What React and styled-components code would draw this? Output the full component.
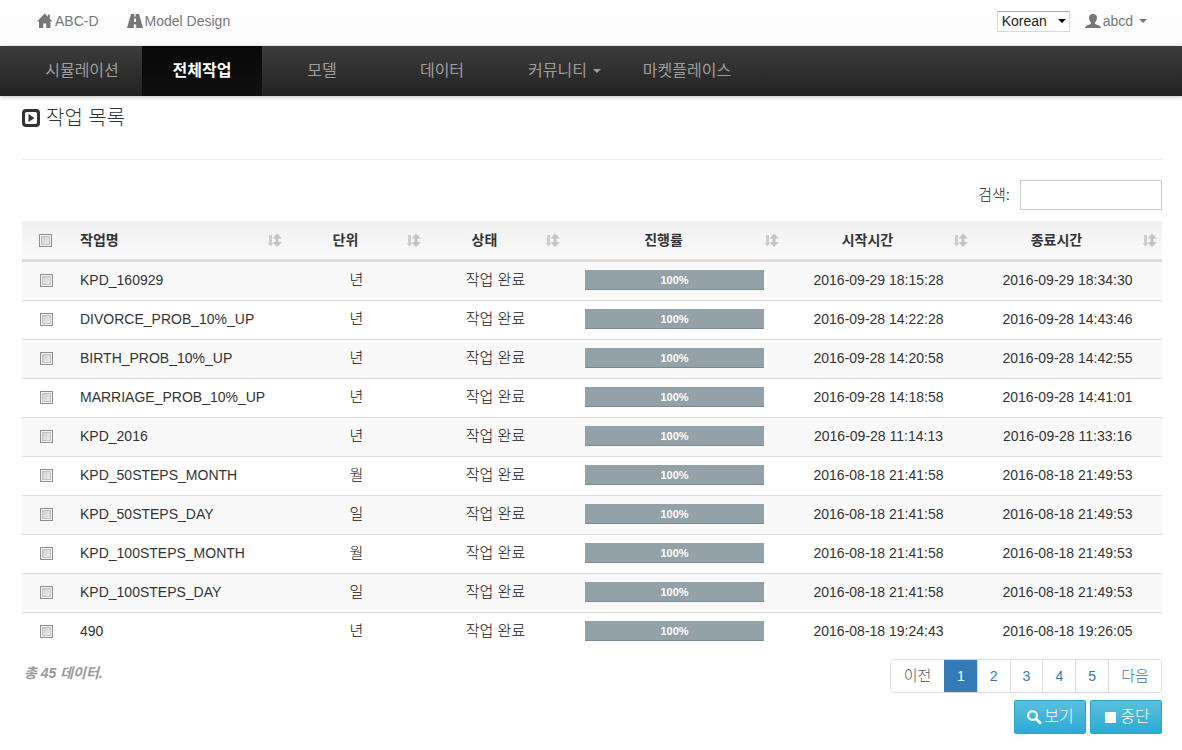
import React, { useState } from "react";
import styled, { createGlobalStyle, css } from "styled-components";

const GlobalStyle = createGlobalStyle`
  * {
    box-sizing: border-box;
  }

  body {
    margin: 0;
    background: #fff;
    color: #333;
    font-family: "Liberation Sans", Arial, "Noto Sans CJK KR", sans-serif;
    font-size: 14px;
    line-height: 20px;
  }

  a {
    text-decoration: none;
  }
`;

const TopBar = styled.header`
  display: flex;
  align-items: center;
  justify-content: space-between;
  height: 46px;
  padding: 0 35px 4px 37px;
  background: linear-gradient(#fff, #fafafa);
`;

const TopGroup = styled.div`
  display: flex;
  align-items: center;
  gap: ${({ $gap }) => $gap}px;
`;

const TopLink = styled.a`
  display: flex;
  align-items: center;
  gap: 2px;
  color: #777;
`;

const Icon = styled.svg`
  flex: none;
  width: ${({ $size }) => $size || 16}px;
  height: ${({ $size }) => $size || 16}px;
  fill: currentColor;
`;

const Caret = styled.span`
  width: 0;
  height: 0;
  margin-left: 4px;
  border-top: 4px solid;
  border-right: 4px solid transparent;
  border-left: 4px solid transparent;
`;

const SelectWrapper = styled.div`
  display: grid;
  align-items: center;
  color: #000;

  > * {
    grid-area: 1 / 1;
  }

  > ${Caret} {
    justify-self: end;
    margin-right: 4px;
    pointer-events: none;
  }
`;

const LanguageSelect = styled.select`
  appearance: none;
  width: 73px;
  height: 21px;
  padding: 0 4px;
  border: 1px solid #d5dade;
  border-top-color: #abadb3;
  border-radius: 0;
  background: #fff;
  color: #222;
  font: inherit;
  line-height: 18px;
`;

const NavBar = styled.nav`
  display: flex;
  height: 50px;
  padding: 0 22px;
  background: linear-gradient(#3c3c3c, #222);
  box-shadow: 0 1px 4px rgba(0, 0, 0, 0.25);
`;

const NavItem = styled.a`
  display: flex;
  align-items: center;
  justify-content: center;
  gap: 2px;
  width: ${({ $wide }) => ($wide ? 125 : 120)}px;
  color: #9d9d9d;
  font-size: 16px;

  ${({ $active }) =>
    $active &&
    css`
      background: linear-gradient(#080808, #0f0f0f);
      color: #fff;
      font-weight: bold;
    `}
`;

const Page = styled.main`
  padding: 8px 20px 16px 22px;
`;

const PageTitle = styled.h1`
  display: flex;
  align-items: center;
  gap: 6px;
  height: 56px;
  margin: 0 0 20px;
  padding-bottom: 28px;
  border-bottom: 1px solid #eee;
  font-size: 20px;
  font-weight: 300;
  line-height: 28px;
`;

const SearchRow = styled.div`
  display: flex;
  align-items: center;
  justify-content: flex-end;
  gap: 10px;
  margin-bottom: 11px;
  color: #222;
  font-size: 15px;
  font-weight: 300;
`;

const SearchInput = styled.input`
  width: 142px;
  height: 30px;
  padding: 4px 8px;
  border: 1px solid #ccc;
  background: #fff;
  font: inherit;
`;

const Table = styled.table`
  width: 100%;
  table-layout: fixed;
  border-spacing: 0;
`;

const HeadCell = styled.th`
  height: 41px;
  padding: 0 5px 0 8px;
  border-bottom: 3px solid #ddd;
  background: linear-gradient(#f0f0f0, #fbfbfb);
  text-align: center;

  &:first-child {
    padding-right: 11px;
  }
`;

const HeadContent = styled.div`
  display: flex;
  align-items: center;
  justify-content: space-between;
  gap: 10px;

  > span {
    flex: 1;
    text-align: ${({ $align }) => $align || "center"};
  }

  > svg {
    color: #c4c4c4;
  }
`;

const Row = styled.tr`
  &:nth-child(odd) {
    background: #f9f9f9;
  }

  &:first-child td {
    height: 38px;
    border-top: 0;
  }
`;

const Cell = styled.td`
  height: 39px;
  padding: 0 8px 2px;
  border-top: 1px solid #ddd;
  text-align: ${({ $align }) => $align || "center"};
  white-space: nowrap;

  &:first-child {
    padding-right: 10px;
  }

  ${({ $korean }) =>
    $korean &&
    css`
      color: #111;
      font-size: 15px;
      font-weight: 300;
    `}
`;

const Checkbox = styled.input`
  appearance: none;
  display: block;
  width: 13px;
  height: 13px;
  margin: 0 auto;
  border: 1px solid #8e8f8f;
  background: linear-gradient(135deg, #c4c8cc, #f4f4f4);
  box-shadow: inset 0 0 0 1px #f4f4f4, inset 0 0 0 2px #c0c3c6;

  &:checked {
    background: #337ab7;
  }
`;

const Progress = styled.div`
  height: 20px;
  margin: 0 12px;
  background: #f5f5f5;
`;

const ProgressBar = styled.div`
  height: 100%;
  background: #93a1a8;
  box-shadow: inset 0 -1px 0 #7c898f;
  color: #fff;
  font-size: 11px;
  font-weight: bold;
`;

const Footer = styled.footer`
  display: flex;
  align-items: flex-start;
  justify-content: space-between;
  padding-top: 8px;
`;

const Total = styled.em`
  padding: 4px 2px;
  color: #999;
  font-weight: bold;
`;

const FooterRight = styled.div`
  display: flex;
  flex-direction: column;
  align-items: flex-end;
  gap: 7px;
`;

const Pagination = styled.div`
  display: flex;
  overflow: hidden;
  border: 1px solid #ddd;
  border-radius: 4px;
`;

const PageButton = styled.button`
  height: 32px;
  padding: 0 12px;
  border: 0;
  border-left: 1px solid #ddd;
  background: #fff;
  color: #337ab7;
  font: inherit;
  cursor: pointer;

  &:first-child {
    border-left: 0;
  }

  ${({ $text }) =>
    $text &&
    css`
      width: 53px;
      font-size: 15px;
      font-weight: 300;
    `}

  ${({ $active }) =>
    $active &&
    css`
      border-color: #337ab7;
      background: #337ab7;
      color: #fff;
    `}

  &:disabled {
    color: #555;
  }
`;

const Actions = styled.div`
  display: flex;
  gap: 4px;
`;

const ActionButton = styled.button`
  display: flex;
  align-items: center;
  justify-content: center;
  gap: 2px;
  width: 72px;
  height: 34px;
  padding: 0;
  border: 1px solid #28a4c9;
  border-radius: 2px;
  background: linear-gradient(#5bc0de, #2aabd2);
  color: #fff;
  font: inherit;
  font-size: 16px;
  font-weight: 300;
  cursor: pointer;
`;

const HomeIcon = () => (
  <Icon viewBox="0 0 16 16">
    <path d="M7.700 0.500L0 8.600h2V15h4.200v-4.600h3V15h4.200V8.600h2L12.800 5.800V1.500h-2v2.300z" />
  </Icon>
);

const RoadIcon = () => (
  <Icon viewBox="0 0 16 16">
    <path
      d="M4 1h3.300v2.500h1.400V1H12l4 14H9.200v-3.500H6.800V15H0zM7.100 5.500l-.2 3.500h2.200l-.2-3.500z"
      fillRule="evenodd"
    />
  </Icon>
);

const UserIcon = () => (
  <Icon viewBox="0 0 16 16">
    <path d="M8 1C5.400 1 3.900 2.500 4 4.800c.1 2.200.9 3.700 2 4.600v1.300c-.7.900-4.700 1.400-5.500 3-.3.500-.4 1.300-.4 1.300h15.800s-.1-.8-.4-1.300c-.8-1.600-4.800-2.100-5.500-3V9.400c1.100-.9 1.900-2.400 2-4.600C12.100 2.500 10.600 1 8 1z" />
  </Icon>
);

const ExpandIcon = () => (
  <Icon $size={18} viewBox="0 0 18 18">
    <path
      d="M4 0h10a4 4 0 0 1 4 4v10a4 4 0 0 1-4 4H4a4 4 0 0 1-4-4V4a4 4 0 0 1 4-4zM4.500 3A1.500 1.500 0 0 0 3 4.500v9A1.500 1.500 0 0 0 4.500 15h9a1.500 1.500 0 0 0 1.500-1.500v-9A1.500 1.500 0 0 0 13.500 3zM6.500 5l6 4-6 4z"
      fillRule="evenodd"
    />
  </Icon>
);

const SortIcon = () => (
  <Icon $size={15} viewBox="0 0 15 15">
    <path d="M2 2h3v8h1.500L3.500 13.500 0.500 10H2z" opacity="0.8" />
    <path d="M10 0.500l5 5h-3.500v3.500H15l-5 5-4.500-5h3V5.500h-3z" />
  </Icon>
);

const SearchIcon = () => (
  <Icon viewBox="0 0 16 16">
    <path
      d="M6.500 1a5.500 5.500 0 1 0 2.900 10.200l3.600 3.600a1.300 1.300 0 0 0 2-2l-3.700-3.600A5.500 5.500 0 0 0 6.500 1zm0 2.200a3.300 3.300 0 1 1 0 6.600 3.300 3.300 0 0 1 0-6.600z"
      fillRule="evenodd"
    />
  </Icon>
);

const StopIcon = () => (
  <Icon viewBox="0 0 16 16">
    <path d="M3 3h11v11H3z" />
  </Icon>
);

const menus = [
  { name: "시뮬레이션" },
  { name: "전체작업", active: true },
  { name: "모델" },
  { name: "데이터" },
  { name: "커뮤니티", dropdown: true },
  { name: "마켓플레이스" },
];

const columns = [
  { name: "작업명", align: "left" },
  { name: "단위" },
  { name: "상태" },
  { name: "진행률" },
  { name: "시작시간" },
  { name: "종료시간" },
];

// the name column takes what is left
const widths = [50, undefined, 139, 139, 219, 189, 189];

const jobs = [
  ["KPD_160929", "년", "2016-09-29 18:15:28", "2016-09-29 18:34:30"],
  ["DIVORCE_PROB_10%_UP", "년", "2016-09-28 14:22:28", "2016-09-28 14:43:46"],
  ["BIRTH_PROB_10%_UP", "년", "2016-09-28 14:20:58", "2016-09-28 14:42:55"],
  ["MARRIAGE_PROB_10%_UP", "년", "2016-09-28 14:18:58", "2016-09-28 14:41:01"],
  ["KPD_2016", "년", "2016-09-28 11:14:13", "2016-09-28 11:33:16"],
  ["KPD_50STEPS_MONTH", "월", "2016-08-18 21:41:58", "2016-08-18 21:49:53"],
  ["KPD_50STEPS_DAY", "일", "2016-08-18 21:41:58", "2016-08-18 21:49:53"],
  ["KPD_100STEPS_MONTH", "월", "2016-08-18 21:41:58", "2016-08-18 21:49:53"],
  ["KPD_100STEPS_DAY", "일", "2016-08-18 21:41:58", "2016-08-18 21:49:53"],
  ["490", "년", "2016-08-18 19:24:43", "2016-08-18 19:26:05"],
].map(([name, unit, start, end]) => ({ name, unit, start, end, progress: 100 }));

const JobTable = () => {
  const [selected, setSelected] = useState([]);

  const toggle = (name) =>
    setSelected((prev) =>
      prev.includes(name) ? prev.filter((n) => n !== name) : [...prev, name]
    );

  const toggleAll = (e) =>
    setSelected(e.target.checked ? jobs.map((job) => job.name) : []);

  return (
    <Table>
      <colgroup>
        {widths.map((width, i) => (
          <col key={i} width={width} />
        ))}
      </colgroup>
      <thead>
        <tr>
          <HeadCell>
            <Checkbox
              type="checkbox"
              aria-label="전체작업"
              checked={selected.length === jobs.length}
              onChange={toggleAll}
            />
          </HeadCell>
          {columns.map(({ name, align }) => (
            <HeadCell key={name}>
              <HeadContent $align={align}>
                <span>{name}</span>
                <SortIcon />
              </HeadContent>
            </HeadCell>
          ))}
        </tr>
      </thead>
      <tbody>
        {jobs.map((job) => (
          <Row key={job.name}>
            <Cell>
              <Checkbox
                type="checkbox"
                aria-label={job.name}
                checked={selected.includes(job.name)}
                onChange={() => toggle(job.name)}
              />
            </Cell>
            <Cell $align="left">{job.name}</Cell>
            <Cell $korean>{job.unit}</Cell>
            <Cell $korean>작업 완료</Cell>
            <Cell>
              <Progress>
                <ProgressBar style={{ width: `${job.progress}%` }}>
                  {job.progress}%
                </ProgressBar>
              </Progress>
            </Cell>
            <Cell>{job.start}</Cell>
            <Cell>{job.end}</Cell>
          </Row>
        ))}
      </tbody>
    </Table>
  );
};

const App = () => (
  <>
    <GlobalStyle />
    <TopBar>
      <TopGroup $gap={28}>
        <TopLink href="#">
          <HomeIcon />
          ABC-D
        </TopLink>
        <TopLink href="#">
          <RoadIcon />
          Model Design
        </TopLink>
      </TopGroup>
      <TopGroup $gap={15}>
        <SelectWrapper>
          <LanguageSelect aria-label="Language" defaultValue="ko">
            <option value="ko">Korean</option>
            <option value="en">English</option>
          </LanguageSelect>
          <Caret />
        </SelectWrapper>
        <TopLink href="#">
          <UserIcon />
          abcd
          <Caret />
        </TopLink>
      </TopGroup>
    </TopBar>
    <NavBar>
      {menus.map(({ name, active, dropdown }) => (
        <NavItem key={name} href="#" $active={active} $wide={dropdown}>
          {name}
          {dropdown && <Caret />}
        </NavItem>
      ))}
    </NavBar>
    <Page>
      <PageTitle>
        <ExpandIcon />
        작업 목록
      </PageTitle>
      <SearchRow>
        <label htmlFor="search">검색:</label>
        <SearchInput id="search" type="text" />
      </SearchRow>
      <JobTable />
      <Footer>
        <Total>총 45 데이터.</Total>
        <FooterRight>
          <Pagination>
            <PageButton $text disabled>
              이전
            </PageButton>
            {[1, 2, 3, 4, 5].map((page) => (
              <PageButton key={page} $active={page === 1}>
                {page}
              </PageButton>
            ))}
            <PageButton $text>다음</PageButton>
          </Pagination>
          <Actions>
            <ActionButton>
              <SearchIcon />
              보기
            </ActionButton>
            <ActionButton>
              <StopIcon />
              중단
            </ActionButton>
          </Actions>
        </FooterRight>
      </Footer>
    </Page>
  </>
);

export default App;
